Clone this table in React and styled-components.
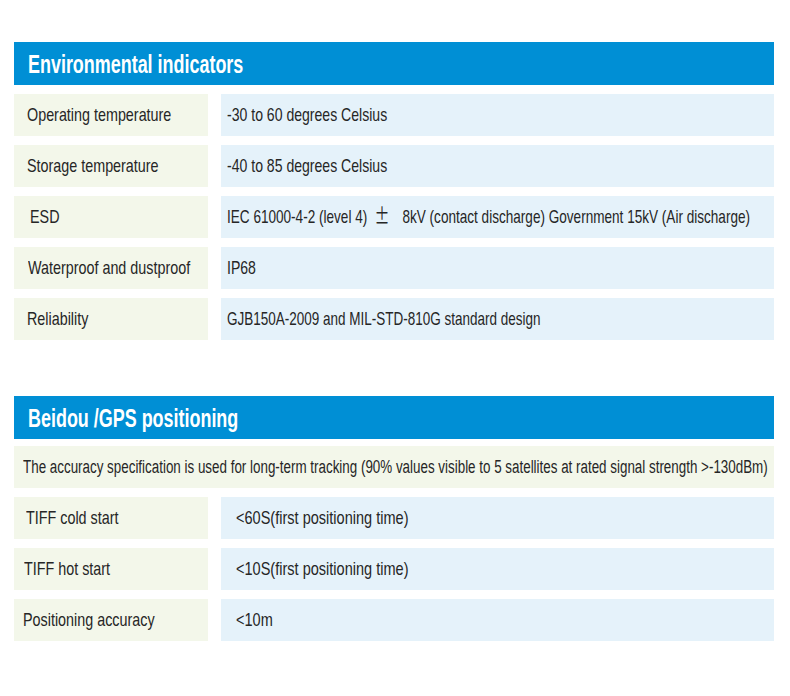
import styled, { createGlobalStyle } from 'styled-components';

const GlobalStyle = createGlobalStyle`
  body {
    margin: 0;
    background: #ffffff;
    font-family: "Liberation Sans", Arial, sans-serif;
  }
`;

// no condensed face is installed, so the narrow look comes from a horizontal squeeze
const Condensed = styled.span`
  display: inline-block;
  white-space: nowrap;
  line-height: 22px;
  transform: scaleX(${({ $scale }) => $scale ?? 0.755});
  transform-origin: 0 50%;
`;

const Page = styled.div`
  width: 760px;
  padding: 42px 16px 40px 14px;
  display: flex;
  flex-direction: column;
  gap: 56px;
`;

const Section = styled.section`
  display: flex;
  flex-direction: column;
  gap: 9px;
`;

const Header = styled.h2`
  margin: 0;
  height: 43px;
  display: flex;
  align-items: center;
  overflow: hidden;
  padding-left: 14px;
  background: #008fd5;
  color: #ffffff;
  font-size: 26px;
  font-weight: 700;
`;

const Row = styled.div`
  display: grid;
  grid-template-columns: 194px minmax(0, 1fr);
  gap: 13px;
  height: 42px;
`;

const Cell = styled.div`
  display: flex;
  align-items: center;
  min-width: 0;
  overflow: hidden;
  padding-left: ${({ $indent }) => $indent ?? 13}px;
  background: ${({ $label }) => ($label ? '#f3f7ea' : '#e5f2fa')};
  color: #262626;
  font-size: 19px;
`;

const Note = styled.div`
  height: 42px;
  display: flex;
  align-items: center;
  overflow: hidden;
  padding-left: 9px;
  margin-top: -2px;
  background: #f3f7ea;
  color: #262626;
  font-size: 18px;
`;

const PlusMinus = styled.span`
  font-family: "Noto Sans CJK SC", sans-serif;
  font-size: 21px;
  line-height: 0;
  margin: 0 18px 0 5px;
`;

const environmental = [
  { label: 'Operating temperature', value: '-30 to 60 degrees Celsius', indent: 13, scale: 0.74 },
  { label: 'Storage temperature', value: '-40 to 85 degrees Celsius', indent: 13, scale: 0.74 },
  { label: 'ESD', value: 'esd', indent: 16, scale: 0.714 },
  { label: 'Waterproof and dustproof', value: 'IP68', indent: 14, scale: 0.74 },
  { label: 'Reliability', value: 'GJB150A-2009 and MIL-STD-810G standard design', indent: 13, scale: 0.71 },
];

const positioning = [
  { label: 'TIFF cold start', value: '<60S(first positioning time)', indent: 12 },
  { label: 'TIFF hot start', value: '<10S(first positioning time)', indent: 10 },
  { label: 'Positioning accuracy', value: '<10m', indent: 9 },
];

const renderValue = (value) =>
  value === 'esd' ? (
    <>
      IEC 61000-4-2 (level 4) <PlusMinus>±</PlusMinus>8kV (contact discharge) Government 15kV (Air discharge)
    </>
  ) : (
    value
  );

const App = () => {
  return (
    <>
      <GlobalStyle />
      <Page>
        <Section>
          <Header>
            <Condensed $scale={0.69}>Environmental indicators</Condensed>
          </Header>
          {environmental.map((row) => (
            <Row key={row.label}>
              <Cell $label $indent={row.indent}>
                <Condensed>{row.label}</Condensed>
              </Cell>
              <Cell $indent={6}>
                <Condensed $scale={row.scale}>{renderValue(row.value)}</Condensed>
              </Cell>
            </Row>
          ))}
        </Section>
        <Section>
          <Header>
            <Condensed $scale={0.69}>Beidou /GPS positioning</Condensed>
          </Header>
          <Note>
            <Condensed $scale={0.744}>
              The accuracy specification is used for long-term tracking (90% values visible to 5 satellites at rated signal strength &gt;-130dBm)
            </Condensed>
          </Note>
          {positioning.map((row) => (
            <Row key={row.label}>
              <Cell $label $indent={row.indent}>
                <Condensed>{row.label}</Condensed>
              </Cell>
              <Cell $indent={15}>
                <Condensed $scale={0.765}>{row.value}</Condensed>
              </Cell>
            </Row>
          ))}
        </Section>
      </Page>
    </>
  );
};

export default App;
